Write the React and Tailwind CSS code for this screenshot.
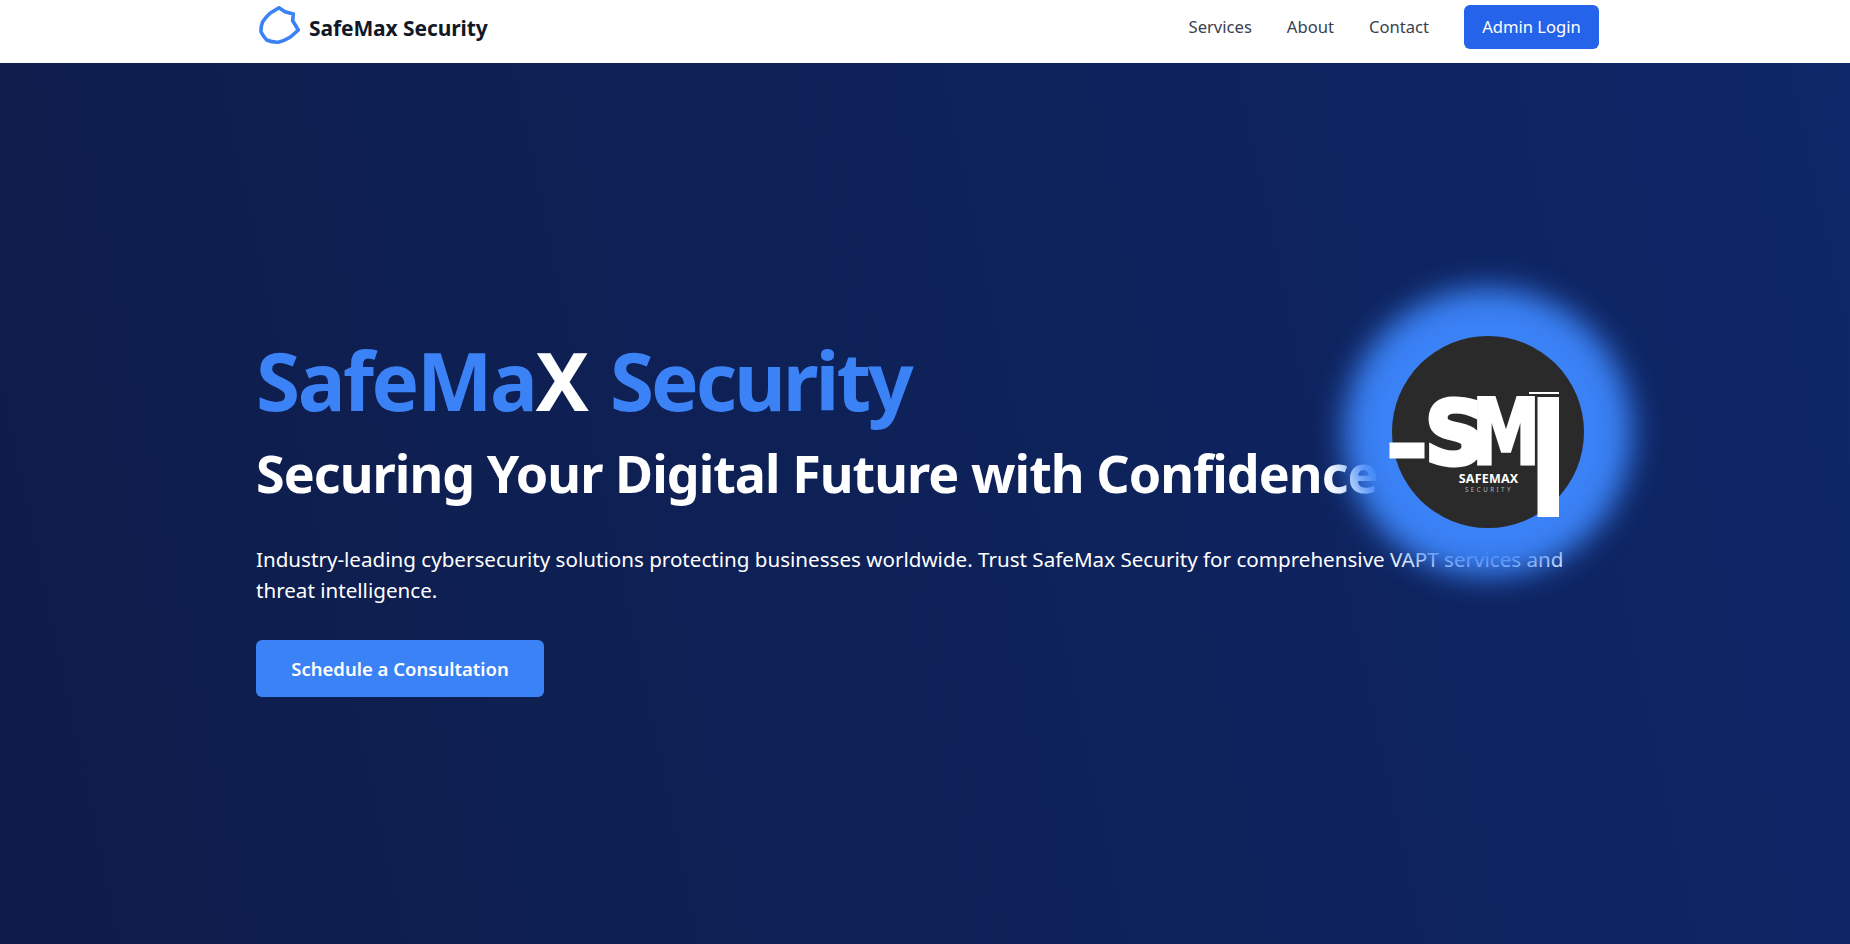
const sans = { fontFamily: '"Noto Sans", "Open Sans", sans-serif' };

function ShieldIcon() {
  return (
    <svg width="46" height="45" viewBox="0 0 46 45" fill="none" className="shrink-0">
      <path
        d="M23 1.8 L29 5.7 L37.3 8 L36.7 14.7 L42.3 24 Q38 28 34 31.3 Q28 35 22.3 36.3 Q16 36.5 10.7 34 Q7 30 5 25.7 Q4.8 20 6.7 15.7 Q10 11 14 7.3 Z"
        stroke="#3b82f6"
        strokeWidth="3.6"
        strokeLinejoin="round"
      />
    </svg>
  );
}

function LogoBadge() {
  return (
    <div className="absolute left-[1392px] top-[336px] w-[192px] h-[192px] rounded-full bg-[#2a2a2a] shadow-[0_0_30px_48px_#3b82f6]">
      <svg width="192" height="192" viewBox="0 0 192 192" className="overflow-visible">
        <text transform="translate(33 128) scale(0.95 1)" fontSize="88" fontWeight="700" fill="#fff" stroke="#fff" strokeWidth="5" fontFamily="DejaVu Sans, sans-serif">S</text>
        <rect x="-2.5" y="106.5" width="35" height="16" fill="#fff" />
        <text transform="translate(80 127.5) scale(0.76 1)" fontSize="90" fontWeight="700" fill="#fff" stroke="#fff" strokeWidth="3" fontFamily="DejaVu Sans, sans-serif">M</text>
        <rect x="145.5" y="61" width="21.5" height="120" fill="#fff" />
        <rect x="137" y="56" width="30" height="2" fill="#fff" />
        <text x="96.5" y="146.5" textAnchor="middle" fontSize="12.5" fontWeight="700" fill="#fff" letterSpacing="0.2" fontFamily="Noto Sans, sans-serif">SAFEMAX</text>
        <text x="97" y="156" textAnchor="middle" fontSize="6.2" fill="#b5b5b5" letterSpacing="2.5" fontFamily="Noto Sans, sans-serif">SECURITY</text>
      </svg>
    </div>
  );
}

export default function App() {
  return (
    <div className="relative h-[944px] overflow-hidden flex flex-col bg-[#0f2766]" style={sans}>
      <nav className="h-[63px] bg-white shrink-0 pt-[5px]">
        <div className="ml-[256px] w-[1343px] flex items-start justify-between">
          <div className="flex items-center gap-[7px] pt-[1px]">
            <ShieldIcon />
            <span className="text-[21px] font-bold text-[#111827] tracking-[-0.1px]">SafeMax Security</span>
          </div>
          <div className="flex items-center gap-[35px] h-[44px]">
            <a className="text-[#374151] text-[16.6px]">Services</a>
            <a className="text-[#374151] text-[16.6px]">About</a>
            <a className="text-[#374151] text-[16.6px]">Contact</a>
            <button className="h-[44px] w-[135px] rounded-md bg-[#2563eb] text-white text-[16.6px]">Admin Login</button>
          </div>
        </div>
      </nav>

      <main className="flex-1 bg-[linear-gradient(78deg,#0e1c49,#0e2768)] pt-[275px]">
        <div className="ml-[256px] w-[1344px]">
          <h1 className="text-[80px] leading-[84px] font-bold text-[#3b82f6] tracking-[-2.45px] [word-spacing:5px]">
            SafeMa<span className="text-white">X</span> <span className="tracking-[-3.05px]">Security</span>
          </h1>
          <h2 className="mt-[19px] text-[52px] leading-[64px] font-bold text-white tracking-[-0.95px]">
            Securing Your Digital Future with Confidence
          </h2>
          <p className="mt-[39px] text-[20.6px] leading-[31px] text-white">
            Industry-leading cybersecurity solutions protecting businesses worldwide. Trust SafeMax Security for comprehensive VAPT services and threat intelligence.
          </p>
          <button className="mt-[34px] h-[57px] w-[288px] rounded-md bg-[#3b82f6] text-white text-[18.5px] font-semibold">
            Schedule a Consultation
          </button>
        </div>
      </main>

      <LogoBadge />
    </div>
  );
}
